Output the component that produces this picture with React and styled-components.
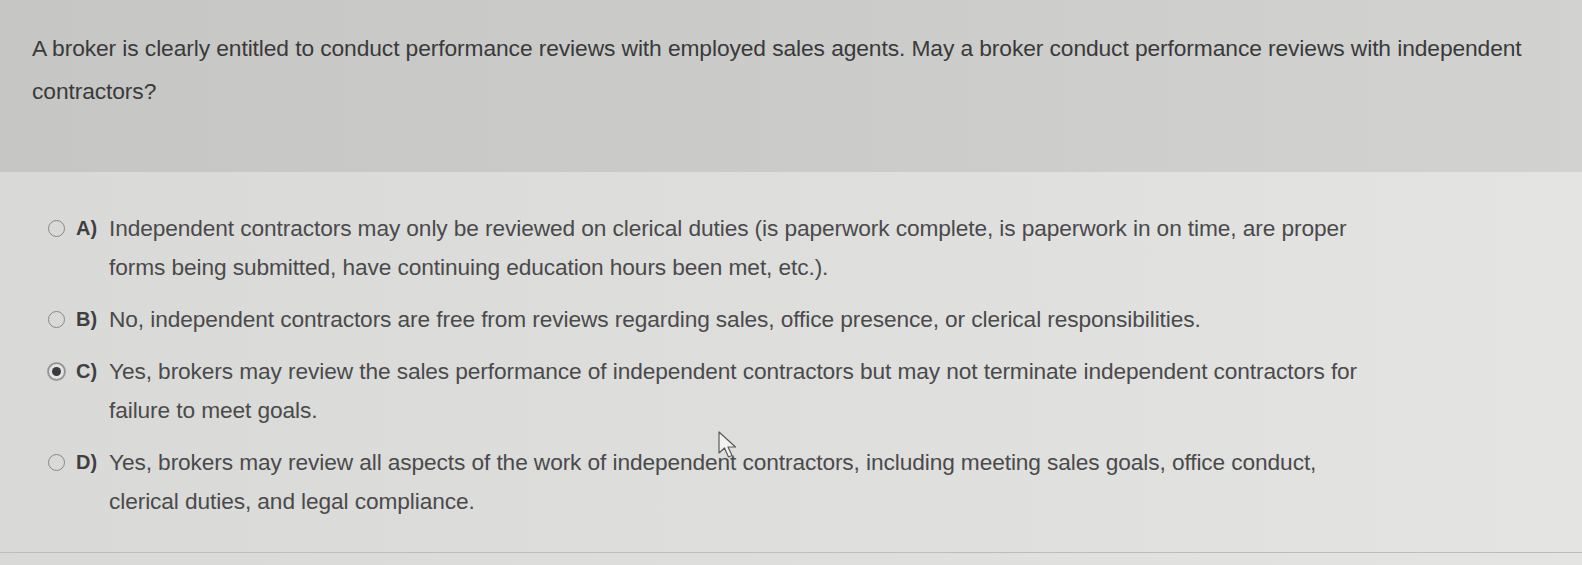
import React from 'react'
import styled, { createGlobalStyle } from 'styled-components'

const Global = createGlobalStyle`
	html, body {
		margin: 0;
		padding: 0;
	}
	body {
		width: 1582px;
		height: 565px;
		overflow: hidden;
		background: #dcdcda;
		font-family: 'Liberation Sans', Arial, sans-serif;
	}
`

const Page = styled.div`
	position: relative;
	width: 1582px;
	height: 565px;
	display: flex;
	flex-direction: column;
	background: linear-gradient(90deg, #d9d9d7 0%, #dededc 50%, #e4e4e2 100%);
`

const Header = styled.div`
	height: 172px;
	box-sizing: border-box;
	padding: 27px 20px 0 32px;
	background: linear-gradient(90deg, #c6c6c4 0%, #cbcbc9 50%, #d2d2d0 100%);
`

const Question = styled.p`
	margin: 0;
	font-size: 22.8px;
	line-height: 43px;
	letter-spacing: -0.1px;
	color: #3a3a3c;
	white-space: nowrap;
`

const Options = styled.div`
	flex: 1;
	display: flex;
	flex-direction: column;
	gap: 13px;
	padding: 37px 0 0 48px;
	border-bottom: 1px solid #bdbdbb;
	margin-bottom: 12px;
`

const Option = styled.div`
	display: grid;
	grid-template-columns: 28px 33px 1fr;
	align-items: start;
`

const Radio = styled.span`
	box-sizing: border-box;
	width: 17px;
	height: 17px;
	margin-top: 11px;
	border-radius: 50%;
	border: 1.6px solid #858789;
	background: ${p => (p.checked ? '#e4e4e4' : 'transparent')};
	display: flex;
	align-items: center;
	justify-content: center;
	box-shadow: ${p => (p.checked ? '0 0 0 1px #a0a0a0' : 'none')};

	&::after {
		content: '';
		display: ${p => (p.checked ? 'block' : 'none')};
		width: 9px;
		height: 9px;
		border-radius: 50%;
		background: #3c3c3e;
	}
`

const Letter = styled.span`
	font-size: 20px;
	font-weight: bold;
	line-height: 39px;
	color: #404042;
`

const Text = styled.span`
	font-size: 22.7px;
	line-height: 39px;
	color: #4a4a4c;
	letter-spacing: -0.1px;
	white-space: nowrap;
`

const Cursor = styled.svg`
	position: absolute;
	left: 718px;
	top: 431px;
`

const options = [
	{
		key: 'A',
		lines: [
			'Independent contractors may only be reviewed on clerical duties (is paperwork complete, is paperwork in on time, are proper',
			'forms being submitted, have continuing education hours been met, etc.).',
		],
	},
	{
		key: 'B',
		lines: ['No, independent contractors are free from reviews regarding sales, office presence, or clerical responsibilities.'],
	},
	{
		key: 'C',
		checked: true,
		lines: [
			'Yes, brokers may review the sales performance of independent contractors but may not terminate independent contractors for',
			'failure to meet goals.',
		],
	},
	{
		key: 'D',
		lines: [
			'Yes, brokers may review all aspects of the work of independent contractors, including meeting sales goals, office conduct,',
			'clerical duties, and legal compliance.',
		],
	},
]

export default function App() {
	return (
		<Page>
			<Global />
			<Header>
				<Question>
					A broker is clearly entitled to conduct performance reviews with employed sales agents. May a broker conduct performance reviews with independent
					<br />
					contractors?
				</Question>
			</Header>
			<Options>
				{options.map(o => (
					<Option key={o.key}>
						<Radio checked={o.checked} />
						<Letter>{o.key})</Letter>
						<Text>
							{o.lines.map((l, i) => (
								<React.Fragment key={i}>
									{i > 0 && <br />}
									{l}
								</React.Fragment>
							))}
						</Text>
					</Option>
				))}
			</Options>
			<Cursor width="24" height="28" viewBox="0 0 24 28">
				<path d="M1 1 L1 22 L6.5 17 L10.5 26 L14 24.5 L10 16 L17.5 16 Z" fill="#f2f2f2" stroke="#5a5a5a" strokeWidth="1.2" strokeLinejoin="round" />
			</Cursor>
		</Page>
	)
}
